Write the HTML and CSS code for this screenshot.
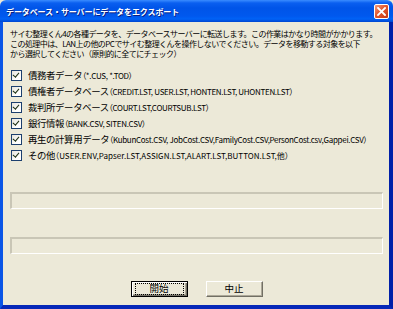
FILE: index.html
```html
<!DOCTYPE html>
<html lang="ja">
<head>
<meta charset="utf-8">
<link rel="stylesheet" href="styles.css">
</head>
<body>
<div class="window">
  <div class="titlebar">
    <span class="title">データベース・サーバーにデータをエクスポート</span>
    <div class="close"><svg width="9" height="9" viewBox="0 0 9 9"><path d="M1 1L8 8M8 1L1 8" stroke="#fff" stroke-width="1.8" stroke-linecap="square"/></svg></div>
  </div>
  <div class="frame">
    <div class="content">
      <p class="desc">サイむ整理くん4の各種データを、データベースサーバーに転送します。この作業はかなり時間がかかります。<br>この処理中は、LAN上の他のPCでサイむ整理くんを操作しないでください。データを移動する対象を以下<br>から選択してください（原則的に全てにチェック）</p>
      <ul class="items">
        <li><span class="cb"></span>債務者データ<span class="files">（*.CUS, *.TOD）</span></li>
        <li><span class="cb"></span>債権者データベース<span class="files">（CREDIT.LST, USER.LST, HONTEN.LST, UHONTEN.LST）</span></li>
        <li><span class="cb"></span>裁判所データベース<span class="files">（COURT.LST,COURTSUB.LST）</span></li>
        <li><span class="cb"></span>銀行情報<span class="files">（BANK.CSV, SITEN.CSV）</span></li>
        <li><span class="cb"></span>再生の計算用データ<span class="files">（KubunCost.CSV, JobCost.CSV,FamilyCost.CSV,PersonCost.csv,Gappei.CSV）</span></li>
        <li><span class="cb"></span>その他<span class="files wide">（USER.ENV,Papser.LST,ASSIGN.LST,ALART.LST,BUTTON.LST,他）</span></li>
      </ul>
      <div class="progress"></div>
      <div class="progress second"></div>
      <div class="buttons">
        <button class="btn default"><span class="focus">開始</span></button>
        <button class="btn">中止</button>
      </div>
    </div>
  </div>
</div>
</body>
</html>
```

FILE: styles.css
```css
html, body {
  margin: 0;
  padding: 0;
  width: 393px;
  height: 309px;
  overflow: hidden;
  background: #ECE9D8;
}
.window {
  width: 393px;
  height: 309px;
  display: flex;
  flex-direction: column;
  font-family: "Noto Sans CJK JP", sans-serif;
  color: #000;
}
.titlebar {
  height: 22px;
  flex: none;
  display: flex;
  align-items: center;
  justify-content: space-between;
  padding: 0 4px 0 6px;
  background: linear-gradient(to bottom, #3A8CFF 0, #0A5FF0 3px, #0054E8 8px, #0058EE 16px, #0062F6 19px, #0046D0 22px);
  border-radius: 6px 6px 0 0;
}
.title {
  color: #fff;
  font-weight: bold;
  font-size: 8px;
  letter-spacing: -0.1px;
  text-shadow: 1px 1px 0 #0A1E80;
}
.close {
  width: 15px;
  height: 15px;
  box-sizing: border-box;
  border: 1px solid #fff;
  border-radius: 2px;
  background: linear-gradient(135deg, #F49A7C 0, #E2582E 45%, #C63A14 100%);
  display: flex;
  align-items: center;
  justify-content: center;
}
.close svg { display: block; }
.frame {
  flex: 1;
  min-height: 0;
  display: flex;
  border-left: 3px solid #0A55E6;
  border-right: 4px solid #001FA8;
  border-bottom: 4px solid #0628B8;
  background: #ECE9D8;
}
.content {
  flex: 1;
  min-width: 0;
  overflow: hidden;
  display: flex;
  flex-direction: column;
  padding: 7px 6px 0 7px;
}
.desc {
  margin: 0;
  font-size: 8px;
  letter-spacing: -0.55px;
  line-height: 10px;
  white-space: nowrap;
}
.items {
  list-style: none;
  margin: 8px 0 0 0;
  padding: 0;
  font-size: 9.4px;
  letter-spacing: -0.35px;
}
.items li {
  height: 16px;
  display: flex;
  align-items: center;
  white-space: nowrap;
}
.files {
  font-size: 8px;
  letter-spacing: -0.3px;
  font-feature-settings: "palt";
}
.files.wide {
  letter-spacing: 0.05px;
}
.cb {
  width: 9px;
  height: 9px;
  flex: none;
  margin: 0 6px 0 1px;
  border: 1px solid #1C3F6E;
  background: #fff linear-gradient(135deg, #E6E4DB 0, #fff 70%);
  position: relative;
}
.cb::after {
  content: "";
  position: absolute;
  left: 2px;
  top: 0px;
  width: 2.5px;
  height: 5px;
  border: solid #1A2E10;
  border-width: 0 1.6px 1.6px 0;
  transform: rotate(40deg);
}
.progress {
  height: 17px;
  flex: none;
  box-sizing: border-box;
  margin: 29px 0 0 0;
  border-top: 2px solid #C9C6B6;
  border-left: 2px solid #C9C6B6;
  border-right: 1px solid #fff;
  border-bottom: 1px solid #fff;
}
.progress.second { margin-top: 28px; }
.buttons {
  display: flex;
  justify-content: center;
  gap: 18px;
  margin-top: 27px;
}
.btn {
  width: 57px;
  height: 16px;
  box-sizing: border-box;
  padding: 0;
  margin: 0;
  font-family: "Noto Sans CJK JP", sans-serif;
  font-size: 9.5px;
  line-height: 1;
  color: #000;
  background: #ECE9D8;
  border: 1px solid;
  border-color: #fff #716F64 #716F64 #fff;
  box-shadow: inset -1px -1px 0 #ACA899;
  display: flex;
  align-items: center;
  justify-content: center;
}
.btn.default {
  border: 1px solid #000;
  box-shadow: inset 1px 1px 0 #fff, inset -1px -1px 0 #716F64, inset -2px -2px 0 #ACA899;
}
.focus {
  display: flex;
  align-items: center;
  justify-content: center;
  width: 47px;
  height: 10px;
  outline: 1px dotted #000;
}
```
